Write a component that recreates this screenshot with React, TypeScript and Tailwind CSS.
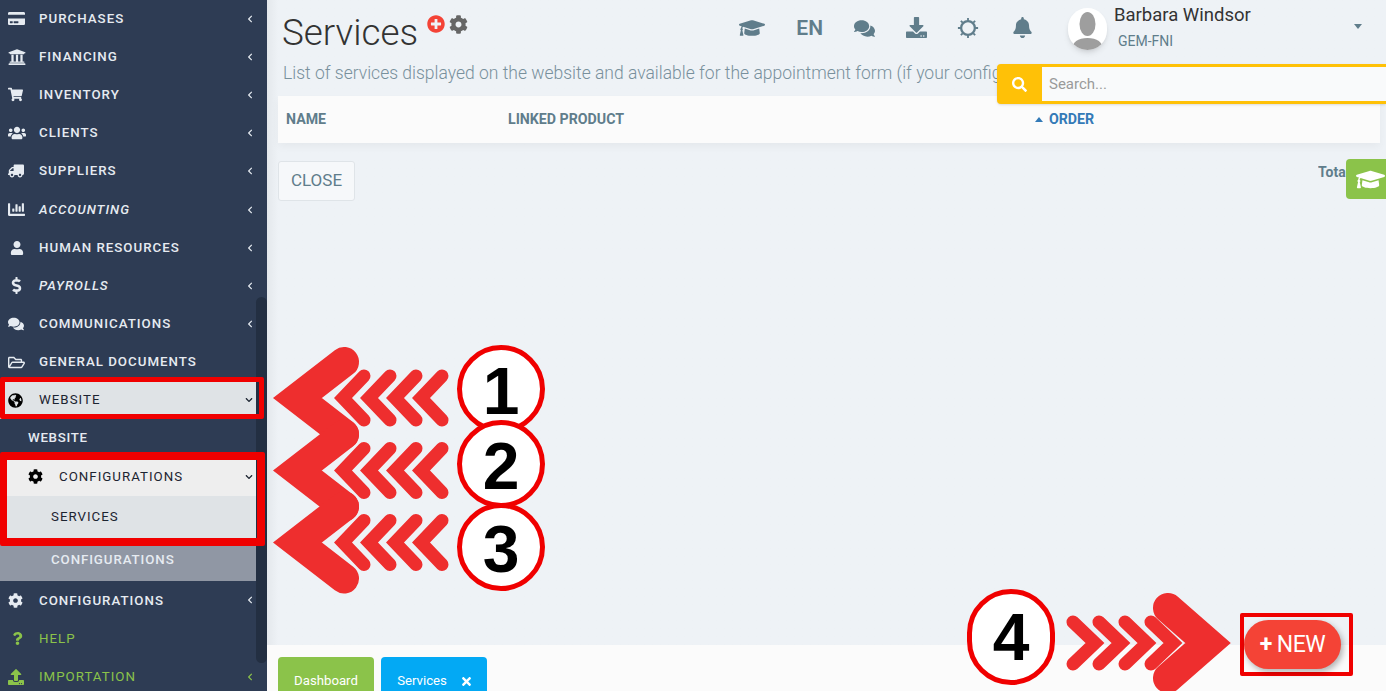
import type { ComponentType } from "react";
import {
  FaBell,
  FaChartBar,
  FaChevronDown,
  FaChevronLeft,
  FaCog,
  FaComments,
  FaCreditCard,
  FaDollarSign,
  FaDownload,
  FaGlobeAmericas,
  FaGraduationCap,
  FaPlusCircle,
  FaQuestion,
  FaRegFolderOpen,
  FaSearch,
  FaShoppingCart,
  FaTimes,
  FaTruck,
  FaUniversity,
  FaUpload,
  FaUser,
  FaUsers,
} from "react-icons/fa";

type MenuItem = {
  label: string;
  icon: ComponentType<{ className?: string }>;
  italic?: boolean;
  noChevron?: boolean;
  iconClass?: string;
};

const topItems: MenuItem[] = [
  { label: "Purchases", icon: FaCreditCard, iconClass: "text-[17px]" },
  { label: "Financing", icon: FaUniversity, iconClass: "text-[18px]" },
  { label: "Inventory", icon: FaShoppingCart, iconClass: "text-[15px]" },
  { label: "Clients", icon: FaUsers, iconClass: "text-[18px]" },
  { label: "Suppliers", icon: FaTruck, iconClass: "text-[16px] -scale-x-100" },
  { label: "Accounting", icon: FaChartBar, italic: true, iconClass: "text-[17px]" },
  { label: "Human Resources", icon: FaUser, iconClass: "text-[14px] ml-0.5" },
  { label: "Payrolls", icon: FaDollarSign, italic: true, iconClass: "text-[17px]" },
  { label: "Communications", icon: FaComments, iconClass: "text-[16px]" },
  { label: "General Documents", icon: FaRegFolderOpen, noChevron: true, iconClass: "text-[17px]" },
];

function MenuRow({ item }: { item: MenuItem }) {
  const Icon = item.icon;
  return (
    <div className="flex h-[38.2px] items-center pt-px text-[#e6ebf1]">
      <span className="flex w-[39px] shrink-0 pl-2">
        <Icon className={item.iconClass} />
      </span>
      <span className={`flex-1 text-[13.3px] font-medium uppercase tracking-[1px] ${item.italic ? "italic" : ""}`}>
        {item.label}
      </span>
      {!item.noChevron && <FaChevronLeft className="mr-[2px] text-[8px]" />}
    </div>
  );
}

function Chevrons({ rows }: { rows: number[] }) {
  return (
    <>
      {rows.map((y) => (
        <g key={y}>
          {[0, 26, 52, 78].map((dx) => (
            <polyline
              key={dx}
              points={`${364 + dx},${y - 22} ${343 + dx},${y} ${364 + dx},${y + 22}`}
              fill="none"
              stroke="#ee2e2e"
              strokeWidth="13"
              strokeLinecap="round"
              strokeMiterlimit="6"
            />
          ))}
          <polyline
            points={`344,${y - 36} 297.5,${y} 344,${y + 36}`}
            fill="none"
            stroke="#ee2e2e"
            strokeWidth="30"
            strokeLinecap="round"
            strokeMiterlimit="6"
          />
        </g>
      ))}
    </>
  );
}

function StepCircle({ n, className }: { n: number; className: string }) {
  return (
    <div
      className={`absolute flex items-center justify-center rounded-full border-[5px] border-[#f00000] bg-white font-['Liberation_Sans',sans-serif] text-[66px] leading-none font-bold text-black ${className}`}
    >
      {n}
    </div>
  );
}

export default function App() {
  return (
    <div className="relative flex h-[691px] w-[1386px] overflow-hidden bg-[#eef2f6] font-[Roboto,sans-serif]">
      <aside className="relative h-full w-[267px] shrink-0 overflow-hidden bg-[#2e3c54]">
        <div className="-mt-px w-[256px]">
          {topItems.map((item) => (
            <MenuRow key={item.label} item={item} />
          ))}
          <div className="flex h-[38px] items-center bg-[#dfe3e6] pt-px text-[#1c2431]">
            <span className="flex w-[39px] shrink-0 pl-2">
              <FaGlobeAmericas className="text-[15px] text-black" />
            </span>
            <span className="flex-1 text-[13.3px] font-normal uppercase tracking-[1px]">Website</span>
            <FaChevronDown className="mr-[3px] text-[8px]" />
          </div>
          <div className="flex h-[38px] items-center pt-px pl-7 text-[13.3px] font-medium uppercase tracking-[0.7px] text-[#e6ebf1]">
            Website
          </div>
          <div className="flex h-[39px] items-center bg-[#eeeeee] pt-px text-[#1c2431]">
            <span className="flex w-[59px] shrink-0 pl-[28px]">
              <FaCog className="text-[15px] text-black" />
            </span>
            <span className="flex-1 text-[13.3px] font-normal uppercase tracking-[1px]">Configurations</span>
            <FaChevronDown className="mr-[3px] text-[8px]" />
          </div>
          <div className="flex h-[42px] items-center bg-[#dfe3e6] pl-[51px] text-[13.3px] font-normal uppercase tracking-[1px] text-[#1c2431]">
            Services
          </div>
          <div className="flex h-[43px] items-center bg-[#9097a4] pt-px pl-[51px] text-[13.3px] font-medium uppercase tracking-[0.9px] text-[#e6ebf1]">
            Configurations
          </div>
          <MenuRow item={{ label: "Configurations", icon: FaCog, iconClass: "text-[15px]" }} />
          <div className="flex h-[38px] items-center pt-px text-[#8bc34a]">
            <span className="flex w-[39px] shrink-0 pl-[11px]">
              <FaQuestion className="text-[13px]" />
            </span>
            <span className="text-[13.3px] font-normal uppercase tracking-[1px]">Help</span>
          </div>
          <div className="flex h-[38px] items-center pt-px text-[#8bc34a]">
            <span className="flex w-[39px] shrink-0 pl-2">
              <FaUpload className="text-[16px]" />
            </span>
            <span className="flex-1 text-[13.3px] font-normal uppercase tracking-[1px]">Importation</span>
            <FaChevronLeft className="mr-[2px] text-[8px]" />
          </div>
        </div>
        <div className="absolute top-[297px] right-0 h-[366px] w-[11px] rounded-md bg-[#232f42]" />
      </aside>

      <main className="flex min-w-0 flex-1 flex-col bg-gradient-to-r from-[#e4e8ec] from-0% to-[#eef2f6] to-[1%]">
        <header className="flex h-[55px] shrink-0 items-start pl-[15px] pr-[24px]">
          <h1 className="mt-[11px] text-[36.800px] leading-[44px] font-light text-[#333]">Services</h1>
          <FaPlusCircle className="mt-[15px] ml-[9px] text-[18px] text-[#f44336]" />
          <FaCog className="mt-[15px] ml-[4px] text-[19px] text-[#666]" />
          <div className="ml-auto flex items-start text-[#607d8b]">
            <FaGraduationCap className="mt-[15px] mr-[31px] text-[26px]" />
            <span className="mt-[16px] mr-[31px] text-[21px] leading-6 font-semibold">EN</span>
            <FaComments className="mt-[18px] mr-[31px] text-[21px]" />
            <FaDownload className="mt-[17px] mr-[30px] text-[21px]" />
            <svg viewBox="0 0 24 24" className="mt-[17px] mr-[33px] h-[22px] w-[22px]" fill="none" stroke="currentColor">
              <circle cx="12" cy="12" r="7.500" strokeWidth="2.500" />
              <path
                d="M12 1v3M12 20v3M1 12h3M20 12h3M4.200 4.200l2 2M17.800 17.800l2 2M4.200 19.800l2-2M17.800 6.200l2-2"
                strokeWidth="2"
              />
            </svg>
            <FaBell className="mt-[17px] mr-[35px] text-[21px]" />
            <div className="mt-2 mr-[7px] flex h-[42px] w-[39px] items-end justify-center overflow-hidden rounded-full bg-white shadow-md">
              <svg viewBox="0 0 39 42" className="h-[42px] w-[39px]" fill="#9e9e9e">
                <ellipse cx="19.5" cy="16" rx="8" ry="12" />
                <path d="M4 42c0-8 6-12 15.500-12S35 34 35 42z" />
              </svg>
            </div>
            <div className="w-[250px]">
              <div className="mt-[4px] text-[18.500px] leading-[22px] text-[#333]">Barbara Windsor</div>
              <div className="mt-[5px] pl-[4px] text-sm leading-5">GEM-FNI</div>
            </div>
            <span className="mt-[24px] -ml-[10px] h-0 w-0 border-x-[4px] border-t-[5px] border-x-transparent border-t-[#607d8b]" />
          </div>
        </header>

        <p className="h-[41px] shrink-0 overflow-hidden whitespace-nowrap pt-[6px] pl-[16px] text-[17.500px] leading-6 font-light text-[#78909c]">
          List of services displayed on the website and available for the appointment form (if your config
        </p>

        <div className="mr-[6px] ml-[11px] flex h-[47px] shrink-0 items-center bg-[#fbfbfb] text-[14.200px] font-bold uppercase text-[#607d8b] shadow-[0_4px_8px_rgba(0,0,0,0.04)]">
          <span className="w-[230px] pl-2">Name</span>
          <span className="w-[527px]">Linked product</span>
          <span className="flex items-center text-[#337ab7]">
            <span className="mr-[6px] h-0 w-0 border-x-[4px] border-b-[5px] border-x-transparent border-b-[#337ab7]" />
            Order
          </span>
        </div>

        <div className="mt-[18px] flex items-start pl-[11px]">
          <button
            type="button"
            className="h-10 w-[77px] rounded-[3px] border border-[#dfe4e8] bg-[#f6f8fa] pb-[1px] text-[17px] uppercase text-[#607d8b]"
          >
            Close
          </button>
          <span className="mt-[1px] ml-auto w-[68px] overflow-hidden text-sm font-bold text-[#607d8b]">Total</span>
        </div>

        <footer className="mt-auto flex h-[46px] shrink-0 items-end gap-[7px] bg-[#fbfbfb] pl-[11px]">
          <div className="flex h-[34px] w-[96px] items-end justify-center rounded-t-[4px] bg-[#8bc34a] text-[13.200px] leading-5 text-white">
            Dashboard
          </div>
          <div className="flex h-[34px] w-[106px] items-end justify-center gap-[13px] rounded-t-[4px] bg-[#03a9f4] pl-[2px] text-[13.200px] leading-5 text-white">
            Services
            <FaTimes className="mb-[3px] text-[13px]" />
          </div>
        </footer>
      </main>

      {/* overlays: search bar, help tab, annotations drawn over the page */}
      <div className="absolute top-[64px] left-[997px] flex h-10 w-[389px] rounded-l-[4px] border-y-[3px] border-l-[3px] border-[#ffc107] bg-[#ffc107] shadow-sm">
        <div className="flex w-[42px] items-center justify-center pr-[4px]">
          <FaSearch className="text-[15px] text-white" />
        </div>
        <div className="flex flex-1 items-center bg-[#f9fafb] pl-[7px] text-[15px] text-[#9a9a9a]">Search...</div>
      </div>

      <div className="absolute top-[159px] left-[1346px] flex h-10 w-10 items-center justify-center rounded-l-[4px] bg-[#8bc34a]">
        <FaGraduationCap className="ml-2 text-[29px] text-white" />
      </div>

      <svg className="pointer-events-none absolute inset-0 h-[691px] w-[1386px]" viewBox="0 0 1386 691">
        <Chevrons rows={[398, 470.5, 542.5]} />
        {[0, 26, 52, 78].map((dx) => (
          <polyline
            key={dx}
            points={`${1073 + dx},622 ${1095 + dx},643 ${1073 + dx},664`}
            fill="none"
            stroke="#ee2e2e"
            strokeWidth="13"
            strokeLinecap="round"
            strokeMiterlimit="6"
          />
        ))}
        <polyline
          points="1168,608 1208,643 1168,678"
          fill="none"
          stroke="#ee2e2e"
          strokeWidth="30"
          strokeLinecap="round"
          strokeMiterlimit="6"
        />
      </svg>

      <div className="absolute top-[377px] left-0 h-[42px] w-[264px] rounded-[2px] border-[5px] border-[#f00000]" />
      <div className="absolute top-[452px] left-0 h-[94px] w-[265px] rounded-[2px] border-y-[8px] border-r-[8px] border-l-[7px] border-[#f00000]" />

      <StepCircle n={1} className="top-[345px] left-[457px] h-[88px] w-[88px] pt-[3px]" />
      <StepCircle n={2} className="top-[420px] left-[457px] h-[88px] w-[88px] pt-[3px]" />
      <StepCircle n={3} className="top-[503px] left-[457px] h-[88px] w-[88px] pt-[4px]" />
      <StepCircle n={4} className="top-[589px] left-[967px] h-[96px] w-[88px]" />

      <div className="absolute top-[613px] left-[1240px] flex h-[63px] w-[113px] items-center rounded-[2px] border-[4px] border-[#f00000]">
        <button
          type="button"
          className="flex h-[49px] w-[97px] items-center justify-center rounded-full bg-[#f44336] pb-[1px] text-[23px] leading-none tracking-[-0.5px] text-white shadow-[2px_3px_6px_rgba(0,0,0,0.3)]"
        >
          <span className="mr-[5px] font-bold">+</span>NEW
        </button>
      </div>
    </div>
  );
}
